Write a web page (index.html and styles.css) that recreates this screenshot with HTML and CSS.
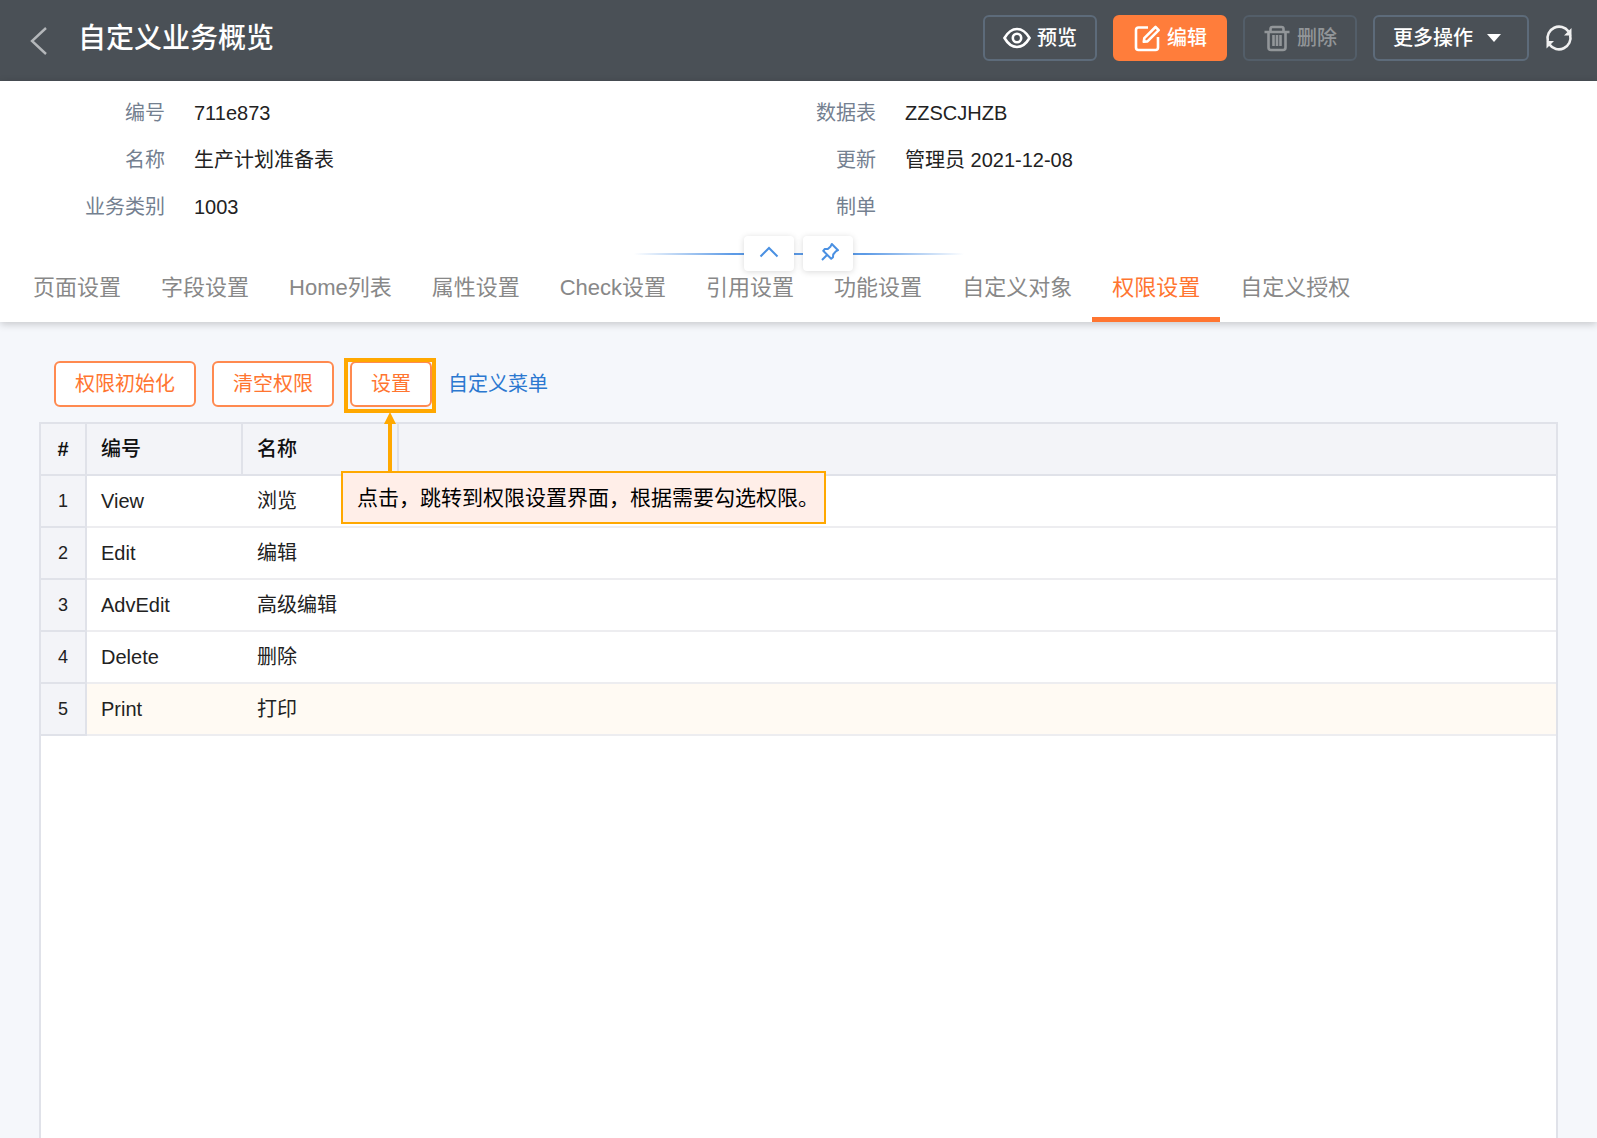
FILE: index.html
```html
<!DOCTYPE html>
<html lang="zh-CN">
<head>
    <meta charset="UTF-8">
    <meta name="viewport" content="width=device-width, initial-scale=1.0">
    <title>自定义业务概览</title>
    <link rel="stylesheet" href="styles.css">
</head>
<body>

    <header class="topbar">
        <button class="icon-btn back" type="button" aria-label="返回">
            <svg width="18" height="28" viewBox="0 0 18 28"><path d="M16 1 2 14 16 27" fill="none" stroke="currentColor" stroke-width="2.4"/></svg>
        </button>
        <h1>自定义业务概览</h1>
        <div class="actions">
            <button class="btn" type="button">
                <svg width="28" height="28" viewBox="0 0 28 28" fill="none" stroke="currentColor" stroke-width="2.6"><path d="M1.500 14C5 8 9 5 14 5S23 8 26.500 14C23 20 19 23 14 23S5 20 1.500 14z"/><circle cx="14" cy="14" r="4.200"/></svg>
                预览
            </button>
            <button class="btn primary" type="button">
                <svg width="28" height="28" viewBox="0 0 28 28" fill="none" stroke="currentColor" stroke-width="2.6" stroke-linejoin="round"><path d="M15 3.500H5.500Q3 3.500 3 6V23.500Q3 26 5.500 26H22.500Q25 26 25 23.500V13"/><path d="M22.500 3 25.700 6.200 14.500 17.400 10.800 17.800 11.300 14.200z"/></svg>
                编辑
            </button>
            <button class="btn" type="button" disabled>
                <svg width="28" height="28" viewBox="0 0 28 28" fill="none" stroke="currentColor" stroke-width="2.6"><path d="M1.500 8H26.500M7.500 7V5Q7.500 3 9.500 3H18.500Q20.500 3 20.500 5V7M5.500 8V23.500Q5.500 26 8 26H20Q22.500 26 22.500 23.500V8M10.500 11V22M14 11V22M17.500 11V22"/></svg>
                删除
            </button>
            <button class="btn more" type="button">
                更多操作
                <svg width="14" height="8" viewBox="0 0 14 8"><path d="M0 0H14L7 8z" fill="currentColor"/></svg>
            </button>
            <button class="icon-btn" type="button" aria-label="刷新">
                <svg width="28" height="28" viewBox="0 0 28 28"><path d="M2.800 17A11.600 11.600 0 0 1 23.500 7.500M25.200 11A11.600 11.600 0 0 1 4.500 20.500" fill="none" stroke="currentColor" stroke-width="2.600"/><path d="M26.500 4V11.500H19zM1.500 24.500V17H9z" fill="currentColor"/></svg>
            </button>
        </div>
    </header>

    <section class="summary">
        <div class="info">
            <dl>
                <dt>编号</dt><dd>711e873</dd>
                <dt>名称</dt><dd>生产计划准备表</dd>
                <dt>业务类别</dt><dd>1003</dd>
            </dl>
            <dl>
                <dt>数据表</dt><dd>ZZSCJHZB</dd>
                <dt>更新</dt><dd>管理员 2021-12-08</dd>
                <dt>制单</dt><dd></dd>
            </dl>
        </div>

        <nav class="tabs">
            <a href="#">页面设置</a>
            <a href="#">字段设置</a>
            <a href="#">Home列表</a>
            <a href="#">属性设置</a>
            <a href="#">Check设置</a>
            <a href="#">引用设置</a>
            <a href="#">功能设置</a>
            <a href="#">自定义对象</a>
            <a href="#" class="active">权限设置</a>
            <a href="#">自定义授权</a>
        </nav>

        <div class="fold">
            <button type="button" aria-label="收起">
                <svg width="20" height="20" viewBox="0 0 20 20"><path d="M1.500 14.500 10 6 18.500 14.500" fill="none" stroke="currentColor" stroke-width="2"/></svg>
            </button>
            <button type="button" class="pin" aria-label="固定">
                <svg width="20" height="20" viewBox="0 0 20 20"><path d="M11.800 2 18 8.200 15.800 9.400 13.200 12.500 13 15.200 11.200 16.800 3.200 8.800 4.800 7 7.800 7 10.600 4.400zM7 13 2 18" fill="none" stroke="currentColor" stroke-width="2" stroke-linejoin="round"/></svg>
            </button>
        </div>
    </section>

    <main>
        <div class="toolbar">
            <button type="button" class="btn-line">权限初始化</button>
            <button type="button" class="btn-line">清空权限</button>
            <div class="marked">
                <button type="button" class="btn-line">设置</button>
                <div class="frame"></div>
                <svg class="arrow" width="14" height="60" viewBox="0 0 14 60"><path d="M7 0 13 12H9V60H5V12H1z" fill="#ffa800"/></svg>
                <div class="callout">点击，跳转到权限设置界面，根据需要勾选权限。</div>
            </div>
            <a href="#">自定义菜单</a>
        </div>

        <div class="grid">
            <table>
                <thead>
                    <tr><th class="num">#</th><th class="col">编号</th><th class="col">名称</th><th></th></tr>
                </thead>
                <tbody>
                    <tr><td class="num">1</td><td>View</td><td>浏览</td><td></td></tr>
                    <tr><td class="num">2</td><td>Edit</td><td>编辑</td><td></td></tr>
                    <tr><td class="num">3</td><td>AdvEdit</td><td>高级编辑</td><td></td></tr>
                    <tr><td class="num">4</td><td>Delete</td><td>删除</td><td></td></tr>
                    <tr class="current"><td class="num">5</td><td>Print</td><td>打印</td><td></td></tr>
                </tbody>
            </table>
        </div>
    </main>

</body>
</html>
```

FILE: styles.css
```css
* { box-sizing: border-box; }

body {
    margin: 0;
    min-height: 100vh;
    display: flex;
    flex-direction: column;
    font-family: "Liberation Sans", "Noto Sans CJK SC", sans-serif;
    font-size: 20px;
    line-height: 28px;
    color: #222;
    background: #f5f7fb;
}

button {
    font: inherit;
    cursor: pointer;
}

svg { flex: none; }

/* top bar */
.topbar {
    height: 81px;
    padding: 0 24px 5px 30px;
    display: flex;
    align-items: center;
    color: #fff;
    background: #4a5056;
}

.topbar h1 {
    margin: 2px 0 0 30px;
    font-size: 28px;
    line-height: 40px;
    font-weight: 500;
}

.icon-btn {
    padding: 0;
    display: flex;
    border: 0;
    color: #f0f0f0;
    background: none;
}

.back {
    margin-top: 6px;
    color: #b4b7ba;
}

.actions {
    margin-left: auto;
    display: flex;
    align-items: center;
    gap: 16px;
}

.btn {
    height: 46px;
    padding: 0 18px;
    display: flex;
    align-items: center;
    gap: 6px;
    border: 2px solid #5d6b7a;
    border-radius: 6px;
    font-weight: 500;
    color: #fff;
    background: none;
}

.btn.primary {
    border-color: #ff7d3b;
    background: #ff7d3b;
}

.btn:disabled {
    border-color: #535e69;
    color: #929699;
}

.btn.more {
    padding-right: 26px;
    gap: 14px;
}

/* record summary */
.summary {
    position: relative;
    padding-top: 9px;
    background: #fff;
    box-shadow: 0 2px 8px rgba(0, 0, 0, 0.2);
}

.info {
    display: grid;
    grid-template-columns: 711fr 886fr;
}

.info dl {
    margin: 0;
    display: grid;
    grid-template-columns: 165px 1fr;
    column-gap: 29px;
    line-height: 47px;
    grid-auto-rows: 47px;
}

.info dt {
    text-align: right;
    color: #748090;
}

.info dd { margin: 0; }

.tabs {
    margin-top: 23px;
    padding-left: 13px;
    display: flex;
}

.tabs a {
    height: 68px;
    padding: 0 20px;
    border-bottom: 5px solid transparent;
    font-size: 22px;
    line-height: 68px;
    color: #888;
    text-decoration: none;
}

.tabs .active {
    border-color: #ff7530;
    color: #ff7530;
}

/* collapse / pin handle lying over the tabs */
.fold {
    position: absolute;
    left: 50%;
    top: 155px;
    width: 330px;
    transform: translateX(-50%);
    display: flex;
    justify-content: center;
    gap: 9px;
    background: linear-gradient(90deg, transparent, #5c9ae6 30%, #5c9ae6 70%, transparent) center / 100% 2px no-repeat;
}

.fold button {
    width: 50px;
    height: 35px;
    padding: 0 0 4px;
    display: flex;
    align-items: center;
    justify-content: center;
    border: 0;
    border-radius: 4px;
    color: #4a90e2;
    background: #fff;
    box-shadow: 0 1px 6px rgba(0, 0, 0, 0.15);
}

.fold .pin { padding-left: 4px; }

/* permissions */
main {
    flex: 1;
    padding: 39px 39px 0;
    display: flex;
    flex-direction: column;
}

.toolbar {
    padding-left: 15px;
    display: flex;
    align-items: center;
    gap: 16px;
}

.toolbar a {
    color: #2b78d0;
    text-decoration: none;
}

.btn-line {
    height: 46px;
    padding: 0 19px;
    display: block;
    border: 2px solid #ff8a50;
    border-radius: 6px;
    color: #ff7530;
    background: #fff;
}

.marked { position: relative; }

.frame {
    position: absolute;
    inset: -3px -4px -6px -6px;
    border: 4px solid #ffa800;
    pointer-events: none;
}

.arrow {
    position: absolute;
    left: 33px;
    top: 51px;
}

.callout {
    position: absolute;
    left: -9px;
    top: 110px;
    z-index: 1;
    height: 53px;
    padding: 0 5px 0 14px;
    border: 2px solid #ffa800;
    font-size: 21px;
    line-height: 49px;
    white-space: nowrap;
    color: #000;
    background: #ffeee8;
}

.grid {
    flex: 1;
    margin-top: 15px;
    border: 2px solid #e0e2e9;
    border-bottom: 0;
    background: #fff;
}

table {
    width: 100%;
    table-layout: fixed;
    border-collapse: separate;
    border-spacing: 0;
}

th,
td {
    height: 52px;
    padding: 0 14px;
    text-align: left;
    border-bottom: 2px solid #ededf0;
}

th {
    font-weight: 500;
    color: #111;
    border-color: #e0e2e9;
    background: #f3f4f8;
}

.col {
    width: 156px;
    border-right: 2px solid #e0e2e9;
}

.num {
    width: 46px;
    padding: 0;
    font-size: 18px;
    text-align: center;
    border-right: 2px solid #e0e2e9;
    border-bottom-color: #e0e2e9;
    background: #f3f4f8;
}

th.num {
    font-size: 20px;
    font-weight: bold;
}

.current td:not(.num) { background: #fffaf3; }
```
